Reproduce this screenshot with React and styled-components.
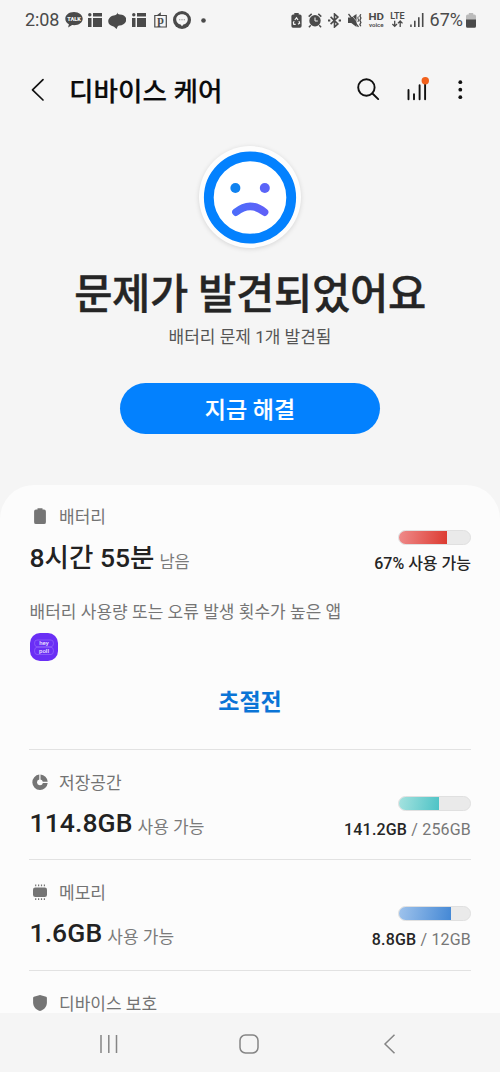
import React from "react";
import styled, { createGlobalStyle } from "styled-components";

const GlobalStyle = createGlobalStyle`
  * { box-sizing: border-box; }
  body { margin: 0; background: #f5f5f5; font-family: Roboto, "Noto Sans CJK KR", sans-serif; }
  svg { display: block; flex: none; }
  button { border: 0; padding: 0; background: none; font: inherit; color: inherit; }
`;

const Screen = styled.div`
  width: 500px;
  height: 1072px;
  overflow: hidden;
  display: flex;
  flex-direction: column;
  background: #f5f5f5;
`;

const StatusBar = styled.div`
  flex: none;
  height: 40px;
  padding: 0 24px 0 25px;
  display: flex;
  justify-content: space-between;
  align-items: center;
  color: #4a4a4a;
`;

const StatusGroup = styled.div`
  display: flex;
  align-items: center;
  gap: ${(p) => p.$gap}px;
`;

const IconSlot = styled.span`
  margin-left: ${(p) => p.$before}px;
`;

const StatusText = styled.span`
  font-size: 18px;
  line-height: 22px;
  letter-spacing: ${(p) => p.$spacing || 0}px;
  white-space: nowrap;
`;

const AppBar = styled.header`
  flex: none;
  height: 100px;
  padding: 0 30px 0 30px;
  display: flex;
  align-items: center;
`;

const AppTitle = styled.h1`
  margin: 0 auto 0 23px;
  padding-top: 3px;
  font-size: 26.6px;
  line-height: 36px;
  font-weight: 500;
  color: #0b0b0b;
  -webkit-text-stroke: 0.2px #0b0b0b;
  white-space: nowrap;
`;

const Actions = styled.div`
  display: flex;
  align-items: center;
  gap: 20px;
`;

const Hero = styled.section`
  flex: none;
  height: 345px;
  padding-top: 6px;
  display: flex;
  flex-direction: column;
  align-items: center;
`;

const FaceBadge = styled.div`
  width: 102px;
  height: 102px;
  border-radius: 50%;
  background: #fdfdfd;
  box-shadow: 0 1px 5px rgba(0, 0, 0, 0.13);
`;

const Headline = styled.h2`
  margin: 22px 0 0;
  font-size: 41.6px;
  line-height: 50px;
  font-weight: 500;
  letter-spacing: -0.3px;
  color: #252525;
  -webkit-text-stroke: 0.4px #252525;
  white-space: nowrap;
`;

const SubHeadline = styled.p`
  margin: 5px 0 0;
  font-size: 17px;
  line-height: 24px;
  color: #555;
  white-space: nowrap;
`;

const FixButton = styled.button`
  margin-top: 34px;
  width: 260px;
  height: 51px;
  padding-top: 4px;
  border-radius: 26px;
  background: #0381fe;
  color: #fff;
  font-size: 23px;
  line-height: 47px;
  font-weight: 500;
  -webkit-text-stroke: 0.2px #fff;
`;

const Card = styled.main`
  flex: 1;
  min-height: 0;
  overflow: hidden;
  padding: 0 29px;
  border-radius: 34px 34px 0 0;
  background: #fcfcfc;
`;

const Section = styled.section`
  height: ${(p) => p.$height}px;
  padding-top: ${(p) => (p.$first ? 20 : 21)}px;
  border-top: ${(p) => (p.$first ? 0 : 1)}px solid #e2e2e2;
`;

const Summary = styled.div`
  display: flex;
  justify-content: space-between;
`;

const SectionTitle = styled.div`
  height: 24px;
  padding-left: 1px;
  display: flex;
  align-items: center;
  gap: 9px;
  font-size: 17px;
  line-height: 24px;
  color: #737373;
  white-space: nowrap;
`;

const Value = styled.div`
  margin: ${(p) => p.$top || 10}px 0 0 0.5px;
  height: 36px;
  font-size: 26.5px;
  line-height: 36px;
  font-weight: 500;
  letter-spacing: ${(p) => p.$spacing || 0}px;
  color: #222;
  white-space: nowrap;
`;

const Unit = styled.span`
  margin-left: 5px;
  font-size: ${(p) => p.$size || 17}px;
  font-weight: 400;
  letter-spacing: 0;
  line-height: 20px;
  vertical-align: -0.5px;
  color: #7a7a7a;
`;

const Usage = styled.div`
  padding-top: 24.5px;
  display: flex;
  flex-direction: column;
  align-items: flex-end;
`;

const Meter = styled.div`
  width: 73.5px;
  height: 15.5px;
  border-radius: 8px;
  overflow: hidden;
  border: 1px solid #e0e0e0;
  background: #eaeaea;
`;

const MeterFill = styled.div`
  height: 100%;
  width: ${(p) => p.$percent}%;
  background: linear-gradient(100deg, ${(p) => p.$from}, ${(p) => p.$to});
`;

const UsageText = styled.div`
  margin-top: 8.5px;
  font-size: 16px;
  line-height: 20px;
  font-weight: 500;
  letter-spacing: ${(p) => p.$spacing}px;
  color: #252525;
  white-space: nowrap;
`;

const Total = styled.span`
  font-weight: 400;
  color: #777;
`;

const Description = styled.p`
  margin: 24px 0 0 0.5px;
  font-size: 17px;
  line-height: 24px;
  letter-spacing: 0.03px;
  color: #757575;
  white-space: nowrap;
`;

const AppIcon = styled.div`
  margin: 8.5px 0 0 0.5px;
  width: 28px;
  height: 28px;
  border-radius: 10px;
  overflow: hidden;
  background: #6a2ff5;
`;

const PowerSave = styled.button`
  display: block;
  margin: 26px auto 0;
  font-size: 23px;
  line-height: 32px;
  font-weight: 700;
  color: #0a74d6;
`;

const NavBar = styled.nav`
  flex: none;
  height: 59px;
  padding: 2px 104px 0 99px;
  display: flex;
  align-items: center;
  background: #f5f5f5;
`;

const NavItem = styled.span`
  margin-left: ${(p) => p.$before || 0}px;
`;

const ink = "#4a4a4a";

const TalkIcon = () => (
  <svg width="18" height="16" viewBox="0 0 18 16">
    <path d="M9 0C4 0 .3 2.900.3 6.700c0 2.300 1.400 4.300 3.600 5.500L3.100 15.600l4-2.500c.6.1 1.200.1 1.900.1 5 0 8.700-2.900 8.700-6.500S14 0 9 0Z" fill={ink} />
    <text x="9" y="9" textAnchor="middle" fontFamily="Roboto, sans-serif" fontSize="5.600" fontWeight="900" fill="#f5f5f5">TALK</text>
  </svg>
);

const GridIcon = () => (
  <svg width="14" height="14" viewBox="0 0 14 14" fill={ink}>
    <circle cx="1.800" cy="1.700" r="1.700" />
    <path d="M5 0h9v3.500H5zM0 5h3.500v9H0zM5 5h9v9H5z" />
  </svg>
);

const SwirlIcon = () => (
  <svg width="18.500" height="17" viewBox="0 0 18 17" fill={ink}>
    <path d="M9.500 0C8.900 1.700 9.600 2.300 11.500 2.400 15.500 2.600 18 4.500 18 7.500c0 3.700-3.500 5.600-6.700 6.100-1.900.3-2.200 1.200-2.800 3.400-1.700-.9-1.900-2.200-3.900-2.800C2 13.400 0 12.300 0 9.500 0 5.700 3.500 3.600 6.700 3.300 8.700 3 8.800 1.200 9.500 0Z" />
  </svg>
);

const PocketIcon = () => (
  <svg width="13" height="16" viewBox="0 0 13 16">
    <path d="M.8 3.500h11.500v11.500H.8z" fill="none" stroke={ink} strokeWidth="1.200" />
    <path d="M2.500 3.500 6.800.3v3.200Z" fill={ink} />
    <text x="6.600" y="11.700" textAnchor="middle" fontFamily="'Liberation Serif', serif" fontSize="12" fontWeight="700" fill={ink}>p</text>
  </svg>
);

const ChatRingIcon = () => (
  <svg width="18" height="18" viewBox="0 0 18 18">
    <circle cx="9" cy="9" r="9" fill={ink} />
    <path d="M9 3.200c-3.500 0-5.800 2.200-5.800 5.200 0 2.600 1.900 4.500 4.400 5.100L9 15.200l1.400-1.700c2.500-.6 4.400-2.500 4.400-5.100 0-3-2.300-5.200-5.800-5.200Z" fill="#f5f5f5" />
    <path d="M6.100 8.200h1.200v1H6.100zM8.400 8.200h1.200v1H8.400zM10.700 8.200h1.200v1h-1.200z" fill="#888" />
  </svg>
);

const DotIcon = () => (
  <svg width="5" height="5" viewBox="0 0 5 5"><circle cx="2.500" cy="2.500" r="2.300" fill={ink} /></svg>
);

const BatteryEcoIcon = () => (
  <svg width="11" height="15" viewBox="0 0 11 15">
    <path d="M3.300 0h4.400v1.500H9A1.700 1.700 0 0 1 10.600 3v10A1.700 1.700 0 0 1 9 14.700H2A1.700 1.700 0 0 1 .4 13V3A1.700 1.700 0 0 1 2 1.500h1.300Z" fill={ink} />
    <path d="m3.800 7 1.700-2.300L7 7M8 8.200l.6 2-1.600 1.100M4.700 11.300H2.800L2.400 9.500l.8-1.300" fill="none" stroke="#f5f5f5" strokeWidth="1.200" />
  </svg>
);

const AlarmIcon = () => (
  <svg width="14" height="15" viewBox="0 0 14 15">
    <circle cx="7" cy="7.800" r="5.700" fill={ink} />
    <path d="M.7 3.600 3.700.9M13.300 3.600 10.300.9M2.800 12.300.9 14.200M11.200 12.300l1.900 1.900" stroke={ink} strokeWidth="1.500" />
    <path d="M7 4.500v3.500h2.800" stroke="#f5f5f5" strokeWidth="1" fill="none" />
  </svg>
);

const BluetoothIcon = () => (
  <svg width="13" height="15" viewBox="0 0 13 15">
    <path d="m2.600 3.900 7.300 7L6.500 14V1l3.400 3.100-7.300 7" fill="none" stroke={ink} strokeWidth="1.600" />
    <path d="M0 7.500h2.300M10.700 7.500H13" stroke={ink} strokeWidth="1.900" />
  </svg>
);

const MuteIcon = () => (
  <svg width="14" height="15" viewBox="0 0 14 15">
    <path d="M0 4.500h3.300L8.500 1v13L3.300 10H0Z" fill={ink} />
    <path d="m2.500.800 7 8.500" stroke="#f5f5f5" strokeWidth=".6" />
    <path d="m.5 1 10 12.800" stroke={ink} strokeWidth="1.300" />
    <path d="M12.800 1.200 11.900 3l1 2-1 2.300 1 2.200-1 2 .9 1.800" fill="none" stroke={ink} strokeWidth="1.300" />
    <path d="m10.300 3.500-.5 1.500.7 2-.6 2" fill="none" stroke={ink} strokeWidth="1" />
  </svg>
);

const HdIcon = () => (
  <svg width="17" height="16" viewBox="0 0 17 16" fill={ink} fontFamily="Roboto, sans-serif">
    <text x="0.500" y="7.900" fontSize="9.800" fontWeight="700" textLength="15.500" lengthAdjust="spacingAndGlyphs">HD</text>
    <text x="1" y="14.700" fontSize="6" fontWeight="600" textLength="14.500" lengthAdjust="spacingAndGlyphs">voice</text>
  </svg>
);

const LteIcon = () => (
  <svg width="15" height="16" viewBox="0 0 15 16">
    <text x="0.300" y="7" fontFamily="Roboto, sans-serif" fontWeight="600" fontSize="8.800" textLength="14.400" lengthAdjust="spacingAndGlyphs" fill={ink}>LTE</text>
    <path d="M4.700 8.800v5.500M2.400 12l2.300 2.400L7 12M10.200 15V9.200M7.900 11.400l2.300-2.400 2.300 2.400" fill="none" stroke={ink} strokeWidth="1.300" />
  </svg>
);

const SignalIcon = () => (
  <svg width="14" height="14" viewBox="0 0 14 14" fill={ink}>
    <path d="M.2 11.500h1.500V14H.2zM4 7.800h1.600V14H4zM8 4.200h1.600V14H8zM11.900 0h1.600v14h-1.600z" />
  </svg>
);

const BatteryLevelIcon = () => (
  <svg width="10" height="15" viewBox="0 0 10 15">
    <path d="M2.800 0h4.400v1.500h1A1.700 1.700 0 0 1 10 3.200V7H0V3.200A1.700 1.700 0 0 1 1.800 1.500h1Z" fill="#bbb" />
    <path d="M0 6.500h10v6.700a1.500 1.500 0 0 1-1.500 1.500h-7A1.500 1.500 0 0 1 0 13.200Z" fill={ink} />
  </svg>
);

const BackIcon = () => (
  <svg width="16" height="24" viewBox="0 0 16 24">
    <path d="M13 1.700 2.500 11.800 13 22" fill="none" stroke="#111" strokeWidth="1.700" strokeLinecap="round" strokeLinejoin="round" />
  </svg>
);

const SearchIcon = () => (
  <svg width="24" height="24" viewBox="0 0 24 24">
    <circle cx="10.400" cy="9.500" r="8.200" fill="none" stroke="#111" strokeWidth="1.900" />
    <path d="m16.200 15.300 6 5.800" stroke="#111" strokeWidth="1.900" strokeLinecap="round" />
  </svg>
);

const ChartIcon = () => (
  <svg width="30" height="26" viewBox="0 0 30 26">
    <path d="M8.500 13v9.200M14 17.300v4.900M19.600 8.300v13.900M25.100 6v16.200" stroke="#111" strokeWidth="1.900" strokeLinecap="round" />
    <circle cx="25.300" cy="3.800" r="3.700" fill="#f2611c" />
  </svg>
);

const MoreIcon = () => (
  <svg width="20" height="24" viewBox="0 0 20 24" fill="#111">
    <circle cx="10.300" cy="4.200" r="1.900" /><circle cx="10.300" cy="11.700" r="1.900" /><circle cx="10.300" cy="19.200" r="1.900" />
  </svg>
);

const SadFace = () => (
  <svg width="102" height="102" viewBox="0 0 102 102">
    <defs>
      <linearGradient id="mouth" x1="0" x2="1"><stop offset="0" stopColor="#4d6cfa" /><stop offset="1" stopColor="#5f60f8" /></linearGradient>
    </defs>
    <circle cx="51" cy="51.500" r="41.200" fill="#fff" stroke="#0381fe" strokeWidth="9.800" />
    <circle cx="36.400" cy="42" r="5" fill="#0f82f0" />
    <circle cx="65.800" cy="42" r="5" fill="#5a64f8" />
    <path d="M36.900 66.200Q51 54.400 65.600 66.200" fill="none" stroke="url(#mouth)" strokeWidth="7.500" strokeLinecap="round" />
  </svg>
);

const CareIcon = ({ children }) => (
  <svg width="20" height="20" viewBox="0 0 20 20" fill="#757575">{children}</svg>
);

const BatteryGlyph = () => (
  <CareIcon><path d="M7.500 1.200h5v1.300H14A1.900 1.900 0 0 1 15.900 4.400v10.800A1.900 1.900 0 0 1 14 17.100H6A1.900 1.900 0 0 1 4.100 15.200V4.400A1.900 1.900 0 0 1 6 2.500h1.500Z" /></CareIcon>
);

const StorageGlyph = () => (
  <CareIcon>
    <path d="M9.300 1.600A7.700 7.700 0 1 0 17.700 10h-4.800A3 3 0 1 1 9.300 6.400Z" />
    <path d="M10.500 1.600a7.800 7.800 0 0 1 7.200 7.200h-4.900a3.100 3.100 0 0 0-2.300-2.400Z" />
  </CareIcon>
);

const MemoryGlyph = () => (
  <CareIcon>
    <rect x="3" y="4.400" width="14" height="9.600" rx="2.200" />
    <path d="M5.100 1.400h1.200v1.800H5.100zM8 1.400h1.200v1.800H8zM10.900 1.400h1.200v1.800h-1.200zM13.800 1.400H15v1.800h-1.200zM5.100 15.200h1.200v1.800H5.100zM8 15.200h1.200v1.800H8zM10.900 15.200h1.200v1.800h-1.200zM13.800 15.200H15v1.800h-1.200z" />
  </CareIcon>
);

const ShieldGlyph = () => (
  <CareIcon><path d="m10 .900 6.100 1.800q.8.300.8 1.100v4.700c0 4.300-3 7.300-6.900 8.500C6.100 15.800 3.100 12.800 3.100 8.500V3.800q0-.8.8-1.100Z" /></CareIcon>
);

const HeyPollLogo = () => (
  <svg width="28" height="28" viewBox="0 0 28 28">
    <path d="M7 7h14q2.500 0 2.500 3.300T21 13.700H7q-2.500 0-2.500-3.400T7 7ZM7 14.300h14q2.500 0 2.500 3.600T21 21.500H7q-2.500 0-2.500-3.600T7 14.300Z" fill="none" stroke="#9a70fa" strokeWidth=".6" />
    <g fill="#eee6ff" fontFamily="Roboto, sans-serif" fontWeight="500" fontSize="6" textAnchor="middle">
      <text x="14" y="12.200">hey</text><text x="14" y="19.700">poll</text>
    </g>
  </svg>
);

const RecentsIcon = () => (
  <svg width="20" height="20" viewBox="0 0 20 20"><path d="M2 1v18M9.800 1v18M17.500 1v18" stroke="#858585" strokeWidth="1.500" /></svg>
);
const HomeIcon = () => (
  <svg width="20" height="20" viewBox="0 0 20 20"><rect x="1" y="1" width="18" height="18" rx="5.500" fill="none" stroke="#858585" strokeWidth="1.500" /></svg>
);
const NavBackIcon = () => (
  <svg width="13" height="20" viewBox="0 0 13 20"><path d="M11.500.8 2 10l9.500 9.200" fill="none" stroke="#858585" strokeWidth="1.500" /></svg>
);

function UsageMeter({ percent, from, to, spacing = 0, children }) {
  return (
    <Usage>
      <Meter><MeterFill $percent={percent} $from={from} $to={to} /></Meter>
      <UsageText $spacing={spacing}>{children}</UsageText>
    </Usage>
  );
}

export default function App() {
  return (
    <Screen>
      <GlobalStyle />
      <StatusBar>
        <StatusGroup $gap={5.5}>
          <StatusText $spacing={-0.1}>2:08</StatusText>
          <TalkIcon /><GridIcon /><SwirlIcon /><GridIcon />
          <IconSlot $before={3}><PocketIcon /></IconSlot>
          <ChatRingIcon />
          <IconSlot $before={4.5}><DotIcon /></IconSlot>
        </StatusGroup>
        <StatusGroup $gap={6}>
          <BatteryEcoIcon />
          <IconSlot $before={0.5}><AlarmIcon /></IconSlot>
          <BluetoothIcon />
          <IconSlot $before={1}><MuteIcon /></IconSlot>
          <HdIcon />
          <IconSlot $before={-1.5}>
            <StatusGroup $gap={5}><LteIcon /><SignalIcon /></StatusGroup>
          </IconSlot>
          <StatusGroup $gap={3}><StatusText>67%</StatusText><BatteryLevelIcon /></StatusGroup>
        </StatusGroup>
      </StatusBar>

      <AppBar>
        <BackIcon />
        <AppTitle>디바이스 케어</AppTitle>
        <Actions><SearchIcon /><ChartIcon /><MoreIcon /></Actions>
      </AppBar>

      <Hero>
        <FaceBadge><SadFace /></FaceBadge>
        <Headline>문제가 발견되었어요</Headline>
        <SubHeadline>배터리 문제 1개 발견됨</SubHeadline>
        <FixButton>지금 해결</FixButton>
      </Hero>

      <Card>
        <Section $first $height={264}>
          <Summary>
            <div>
              <SectionTitle><BatteryGlyph />배터리</SectionTitle>
              <Value $top={11}>8시간 55분<Unit $size={16.5}>남음</Unit></Value>
            </div>
            <UsageMeter percent={68} from="#ef8b8b" to="#dc3a30">67% 사용 가능</UsageMeter>
          </Summary>
          <Description>배터리 사용량 또는 오류 발생 횟수가 높은 앱</Description>
          <AppIcon><HeyPollLogo /></AppIcon>
          <PowerSave>초절전</PowerSave>
        </Section>
        <Section $height={110}>
          <Summary>
            <div>
              <SectionTitle><StorageGlyph />저장공간</SectionTitle>
              <Value $spacing={0.1}>114.8GB<Unit>사용 가능</Unit></Value>
            </div>
            <UsageMeter percent={56} from="#a5e2df" to="#4dc3c6" spacing={0.18}>141.2GB <Total>/ 256GB</Total></UsageMeter>
          </Summary>
        </Section>
        <Section $height={110.500}>
          <Summary>
            <div>
              <SectionTitle><MemoryGlyph />메모리</SectionTitle>
              <Value $spacing={0.1}>1.6GB<Unit>사용 가능</Unit></Value>
            </div>
            <UsageMeter percent={73.500} from="#9fc3ec" to="#4488d5" spacing={0.18}>8.8GB <Total>/ 12GB</Total></UsageMeter>
          </Summary>
        </Section>
        <Section $height={110}>
          <SectionTitle><ShieldGlyph />디바이스 보호</SectionTitle>
        </Section>
      </Card>

      <NavBar>
        <NavItem><RecentsIcon /></NavItem>
        <NavItem $before={119.500}><HomeIcon /></NavItem>
        <NavItem $before={124.500}><NavBackIcon /></NavItem>
      </NavBar>
    </Screen>
  );
}
